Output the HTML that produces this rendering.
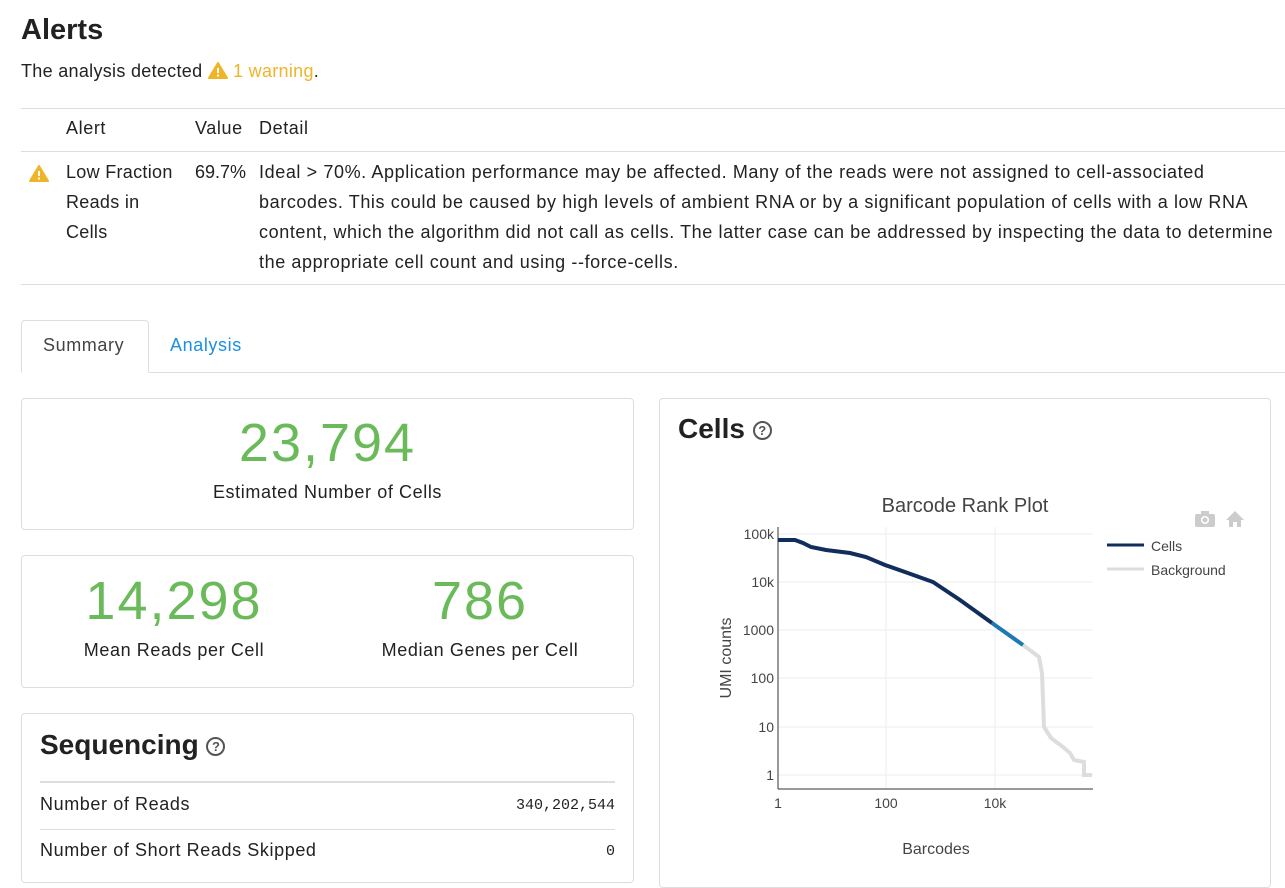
<!DOCTYPE html>
<html><head><meta charset="utf-8"><style>
*{margin:0;padding:0;box-sizing:border-box}
body{width:1285px;height:867px;overflow:hidden;background:#fff;font-family:"Liberation Sans",sans-serif;color:#222;position:relative}
.a{position:absolute;white-space:nowrap}
.t{font-size:18px;letter-spacing:0.6px}
.card{position:absolute;border:1px solid #ddd;border-radius:4px;background:#fff}
.big{position:absolute;color:#6aba5a;font-size:54px;letter-spacing:2px;text-align:center}
.hl{position:absolute;height:1px;background:#ddd}
.q{display:inline-block;width:19px;height:19px;border:2px solid #555;border-radius:50%;font-size:13px;line-height:15px;text-align:center;color:#555;font-weight:bold;vertical-align:middle;letter-spacing:0}
</style></head><body>
<div class="a" style="left:21px;top:14px;font-size:29px;font-weight:bold;color:#222">Alerts</div>
<div class="a t" style="left:21px;top:61px;letter-spacing:0.3px">The analysis detected <svg width="20" height="17" viewBox="0 0 20 17" style="vertical-align:-2px"><path d="M10 1 L19 16 L1 16 Z" fill="#f0b429" stroke="#f0b429" stroke-linejoin="round" stroke-width="2"/><rect x="9" y="6" width="2" height="5" fill="#fff"/><rect x="9" y="12.5" width="2" height="2" fill="#fff"/></svg> <span style="color:#f0b429">1 warning</span>.</div>
<div class="hl" style="left:21px;top:108px;width:1264px"></div>
<div class="a t" style="left:66px;top:118px">Alert</div>
<div class="a t" style="left:195px;top:118px">Value</div>
<div class="a t" style="left:259px;top:118px">Detail</div>
<div class="hl" style="left:21px;top:151px;width:1264px"></div>
<svg class="a" style="left:29px;top:165px" width="20" height="17" viewBox="0 0 20 17"><path d="M10 1 L19 16 L1 16 Z" fill="#f0b429" stroke="#f0b429" stroke-linejoin="round" stroke-width="2"/><rect x="9" y="6" width="2" height="5" fill="#fff"/><rect x="9" y="12.5" width="2" height="2" fill="#fff"/></svg>
<div class="a t" style="left:66px;top:157px;line-height:30px;letter-spacing:0.3px">Low Fraction<br>Reads in<br>Cells</div>
<div class="a t" style="left:195px;top:157px;line-height:30px;letter-spacing:0">69.7%</div>
<div class="a t" style="left:259px;top:157px;line-height:30px">Ideal &gt; 70%. Application performance may be affected. Many of the reads were not assigned to cell-associated<br>barcodes. This could be caused by high levels of ambient RNA or by a significant population of cells with a low RNA<br>content, which the algorithm did not call as cells. The latter case can be addressed by inspecting the data to determine<br>the appropriate cell count and using --force-cells.</div>
<div class="hl" style="left:21px;top:284px;width:1264px"></div>
<div class="hl" style="left:21px;top:372px;width:1264px"></div>
<div class="a" style="left:21px;top:320px;width:128px;height:53px;border:1px solid #ddd;border-bottom:1px solid #fff;border-radius:4px 4px 0 0;background:#fff"></div>
<div class="a t" style="left:43px;top:335px;color:#444">Summary</div>
<div class="a t" style="left:170px;top:335px;color:#1a8fe3">Analysis</div>

<div class="card" style="left:21px;top:398px;width:613px;height:132px"></div>
<div class="big" style="left:21px;top:412px;width:613px">23,794</div>
<div class="a t" style="left:21px;top:482px;width:613px;text-align:center">Estimated Number of Cells</div>

<div class="card" style="left:21px;top:555px;width:613px;height:133px"></div>
<div class="big" style="left:21px;top:570px;width:306px">14,298</div>
<div class="a t" style="left:21px;top:640px;width:306px;text-align:center">Mean Reads per Cell</div>
<div class="big" style="left:327px;top:570px;width:306px">786</div>
<div class="a t" style="left:327px;top:640px;width:306px;text-align:center">Median Genes per Cell</div>

<div class="card" style="left:21px;top:713px;width:613px;height:170px"></div>
<div class="a" style="left:40px;top:729px;font-size:28px;font-weight:bold">Sequencing <span class="q">?</span></div>
<div class="hl" style="left:40px;top:781px;width:575px;height:2px"></div>
<div class="a t" style="left:40px;top:794px">Number of Reads</div>
<div class="a" style="right:670px;top:797px;font-family:'Liberation Mono',monospace;font-size:15px">340,202,544</div>
<div class="hl" style="left:40px;top:829px;width:575px"></div>
<div class="a t" style="left:40px;top:840px">Number of Short Reads Skipped</div>
<div class="a" style="right:670px;top:843px;font-family:'Liberation Mono',monospace;font-size:15px">0</div>

<div class="card" style="left:659px;top:398px;width:612px;height:490px"></div>
<div class="a" style="left:678px;top:413px;font-size:28px;font-weight:bold">Cells <span class="q">?</span></div>
<svg class="a" style="left:660px;top:480px" width="610" height="387" viewBox="660 480 610 387" font-family="Liberation Sans, sans-serif">
<text x="965" y="512" font-size="20" fill="#444" text-anchor="middle">Barcode Rank Plot</text>
<g stroke="#eee" stroke-width="1">
<line x1="886" y1="527" x2="886" y2="789"/><line x1="995" y1="527" x2="995" y2="789"/>
<line x1="778" y1="534" x2="1093" y2="534"/><line x1="778" y1="582" x2="1093" y2="582"/><line x1="778" y1="630" x2="1093" y2="630"/><line x1="778" y1="678" x2="1093" y2="678"/><line x1="778" y1="727" x2="1093" y2="727"/><line x1="778" y1="775" x2="1093" y2="775"/>
</g>
<line x1="778" y1="527" x2="778" y2="789" stroke="#333"/>
<line x1="778" y1="789" x2="1093" y2="789" stroke="#333"/>
<g font-size="14" fill="#444" text-anchor="end">
<text x="774" y="539">100k</text><text x="774" y="587">10k</text><text x="774" y="635">1000</text><text x="774" y="683">100</text><text x="774" y="732">10</text><text x="774" y="780">1</text>
</g>
<g font-size="14" fill="#444" text-anchor="middle"><text x="778" y="808">1</text><text x="886" y="808">100</text><text x="995" y="808">10k</text></g>
<text x="936" y="854" font-size="16" fill="#444" text-anchor="middle">Barcodes</text>
<text transform="translate(731,658) rotate(-90)" font-size="16" fill="#444" text-anchor="middle">UMI counts</text>
<polyline fill="none" stroke="#ddd" stroke-width="4" points="1023,645 1039,657 1042,673 1044,727 1051,738 1063,747 1070,753 1074,760 1084,762 1084,775 1092,775"/>
<polyline fill="none" stroke="#102d5c" stroke-width="4" points="778,540 795,540 803,543 811,547 826,550 850,553 866,557 885,565 905,572 933,582 960,600 992,623"/>
<polyline fill="none" stroke="#1e78b4" stroke-width="4" points="992,623 1023,645"/>
<line x1="1107" y1="545" x2="1144" y2="545" stroke="#102d5c" stroke-width="3"/>
<text x="1151" y="551" font-size="14" fill="#444">Cells</text>
<line x1="1107" y1="569" x2="1144" y2="569" stroke="#ddd" stroke-width="3"/>
<text x="1151" y="575" font-size="14" fill="#444">Background</text>
<g fill="#ccc"><rect x="1195" y="514" width="20" height="13" rx="2"/><rect x="1201" y="511" width="8" height="4"/><circle cx="1205" cy="520" r="4" fill="#fff"/><circle cx="1205" cy="520" r="2.5"/>
<path d="M1235 511 L1226 520 L1229 520 L1229 527 L1233 527 L1233 522 L1237 522 L1237 527 L1241 527 L1241 520 L1244 520 Z"/></g>
</svg>
</body></html>
